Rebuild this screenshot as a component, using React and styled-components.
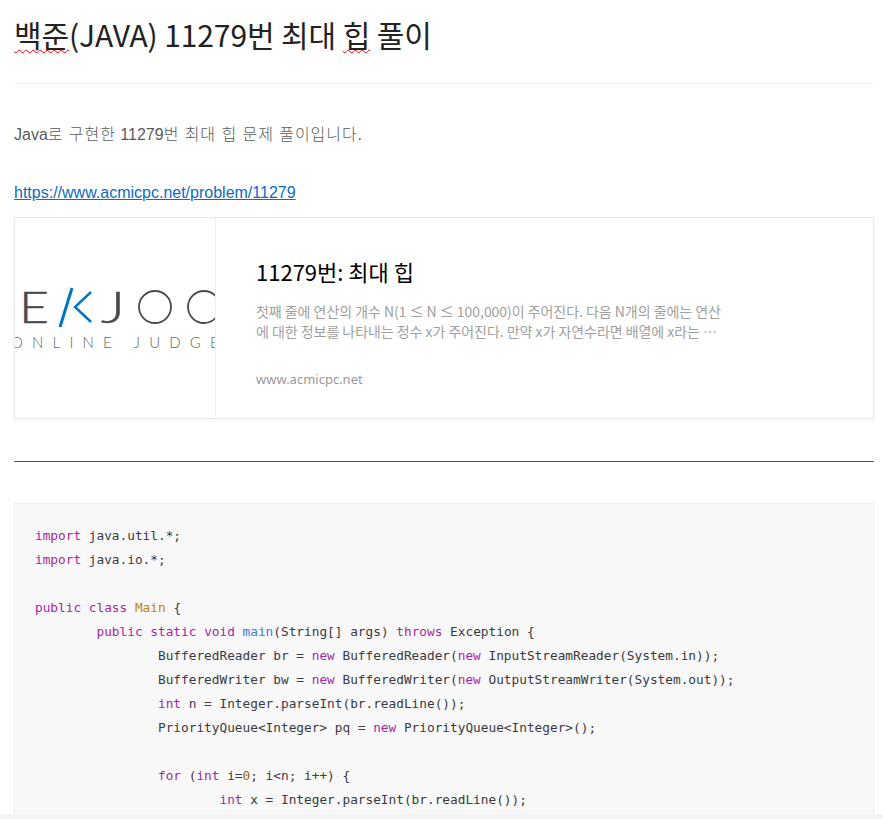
import styled, { createGlobalStyle } from "styled-components";

const GlobalStyle = createGlobalStyle`
  html, body {
    margin: 0;
    padding: 0;
    background: #fff;
    overflow: hidden;
  }
`;

const sans = `"Liberation Sans", "Noto Sans CJK KR", sans-serif`;
const cjk = `"Noto Sans CJK KR", sans-serif`;

const Page = styled.div`
  height: 819px;
  box-sizing: border-box;
  padding: 0 9px 0 14px;
  overflow: hidden;
  position: relative;
`;

const Header = styled.header`
  height: 84px;
  box-sizing: border-box;
  padding-top: 12px;
  border-bottom: 1px solid #f1f1f1;
`;

const Title = styled.h1`
  margin: 0;
  font-family: ${cjk};
  font-size: 30px;
  font-weight: 400;
  line-height: 44px;
  color: #222;
  letter-spacing: -0.1px;
`;

const Misspelled = styled.span`
  text-decoration: underline wavy #f00000 1px;
  text-underline-offset: 2px;
`;

const Paragraph = styled.p`
  margin: 38px 0 0;
  font-family: ${sans};
  font-size: 16px;
  line-height: 26px;
  color: #5a5a5a;
`;

const Hangul = styled.span`
  font-weight: 300;
  letter-spacing: 0.95px;
`;

const LinkRow = styled.p`
  margin: 32px 0 0;
  font-family: ${sans};
  font-size: 16px;
  line-height: 26px;
`;

const Link = styled.a`
  color: #0a6cc4;
  text-decoration: underline;
`;

const Card = styled.div`
  display: flex;
  height: 202px;
  box-sizing: border-box;
  margin-top: 11px;
  border: 1px solid #e8e8e8;
  box-shadow: 0 1px 2px rgba(0, 0, 0, 0.05);
`;

const Thumb = styled.div`
  flex: 0 0 200px;
  border-right: 1px solid #eee;
  overflow: hidden;
`;

const CardBody = styled.div`
  flex: 1;
  padding: 36px 40px 0;
  min-width: 0;
`;

const CardTitle = styled.div`
  font-family: ${cjk};
  font-size: 22px;
  line-height: 34px;
  color: #000;
`;

const CardDesc = styled.div`
  width: 468px;
  margin-top: 13px;
  font-family: ${cjk};
  font-size: 14px;
  letter-spacing: -0.04px;
  line-height: 20px;
  color: #a0a0a0;
  display: -webkit-box;
  -webkit-box-orient: vertical;
  -webkit-line-clamp: 2;
  overflow: hidden;
`;

const CardHost = styled.div`
  margin-top: 28px;
  font-family: "Noto Sans", sans-serif;
  font-size: 13px;
  line-height: 20px;
  color: #999;
`;

const Rule = styled.hr`
  margin: 42px 0 41px;
  border: 0;
  border-top: 1px solid #555;
`;

const CodeBlock = styled.pre`
  margin: 0;
  padding: 20px;
  height: 400px;
  box-sizing: border-box;
  background: #f8f8f8;
  border: 1px solid #eee;
  font-family: "DejaVu Sans Mono", monospace;
  font-size: 12.78px;
  line-height: 24px;
  color: #383a42;
  tab-size: 8;
`;

const Keyword = styled.span`
  color: #a626a4;
`;

const ClassName = styled.span`
  color: #c18401;
`;

const FuncName = styled.span`
  color: #4078f2;
`;

const Num = styled.span`
  color: #986801;
`;

const BottomBar = styled.div`
  position: absolute;
  left: 0;
  right: 0;
  bottom: 0;
  height: 5px;
  background: #f3f3f3;
`;

const LogoText = styled.text`
  font-family: Lato, "Noto Sans", sans-serif;
  font-weight: 300;
  fill: ${(props) => props.$fill || "#4a4a4a"};
`;

const Logo = () => (
  <svg width="200" height="200" viewBox="0 0 200 200">
    <LogoText x="4" y="105" fontSize="44" textLength="30" lengthAdjust="spacingAndGlyphs" stroke="#4a4a4a" strokeWidth="0.5">E</LogoText>
    <line x1="57" y1="70" x2="45" y2="109" stroke="#0076c0" strokeWidth="3" />
    <polyline points="76,74 60,89 76,104" fill="none" stroke="#0076c0" strokeWidth="2.4" />
    <LogoText x="86" y="105" fontSize="44" textLength="24" lengthAdjust="spacingAndGlyphs" stroke="#4a4a4a" strokeWidth="0.5">J</LogoText>
    <circle cx="140" cy="89" r="16" fill="none" stroke="#4a4a4a" strokeWidth="1.8" />
    <circle cx="189" cy="89" r="16" fill="none" stroke="#4a4a4a" strokeWidth="1.8" />
    <LogoText x="-4" y="130" fontSize="15" letterSpacing="9.2" $fill="#666">ONLINE JUDGE</LogoText>
  </svg>
);

const App = () => (
  <Page>
    <GlobalStyle />
    <Header>
      <Title>
        <Misspelled>백준</Misspelled>(JAVA) 11279번 최대 <Misspelled>힙</Misspelled> 풀이
      </Title>
    </Header>
    <Paragraph>
      Java<Hangul>로 구현한</Hangul> 11279<Hangul>번 최대 힙 문제 풀이입니다.</Hangul>
    </Paragraph>
    <LinkRow>
      <Link href="#">https://www.acmicpc.net/problem/11279</Link>
    </LinkRow>
    <Card>
      <Thumb>
        <Logo />
      </Thumb>
      <CardBody>
        <CardTitle>11279번: 최대 힙</CardTitle>
        <CardDesc>
          첫째 줄에 연산의 개수 N(1 ≤ N ≤ 100,000)이 주어진다. 다음 N개의 줄에는 연산에 대한 정보를 나타내는 정수 x가 주어진다. 만약 x가 자연수라면 배열에 x라는 값을 넣는(추가하는) 연산이고, x가 0이라면 배열에서 가장 큰 값을 출력하고 그 값을 배열에서 제거하는 경우이다.
        </CardDesc>
        <CardHost>www.acmicpc.net</CardHost>
      </CardBody>
    </Card>
    <Rule />
    <CodeBlock>
      <Keyword>import</Keyword> java.util.*;{"\n"}
      <Keyword>import</Keyword> java.io.*;{"\n\n"}
      <Keyword>public</Keyword> <Keyword>class</Keyword> <ClassName>Main</ClassName> {"{\n"}
      {"\t"}<Keyword>public</Keyword> <Keyword>static</Keyword> <Keyword>void</Keyword> <FuncName>main</FuncName>(String[] args) <Keyword>throws</Keyword> Exception {"{\n"}
      {"\t\t"}BufferedReader br = <Keyword>new</Keyword> BufferedReader(<Keyword>new</Keyword> InputStreamReader(System.in));{"\n"}
      {"\t\t"}BufferedWriter bw = <Keyword>new</Keyword> BufferedWriter(<Keyword>new</Keyword> OutputStreamWriter(System.out));{"\n"}
      {"\t\t"}<Keyword>int</Keyword> n = Integer.parseInt(br.readLine());{"\n"}
      {"\t\t"}PriorityQueue&lt;Integer&gt; pq = <Keyword>new</Keyword> PriorityQueue&lt;Integer&gt;();{"\n\n"}
      {"\t\t"}<Keyword>for</Keyword> (<Keyword>int</Keyword> i=<Num>0</Num>; i&lt;n; i++) {"{\n"}
      {"\t\t\t"}<Keyword>int</Keyword> x = Integer.parseInt(br.readLine());{"\n"}
    </CodeBlock>
    <BottomBar />
  </Page>
);

export default App;
